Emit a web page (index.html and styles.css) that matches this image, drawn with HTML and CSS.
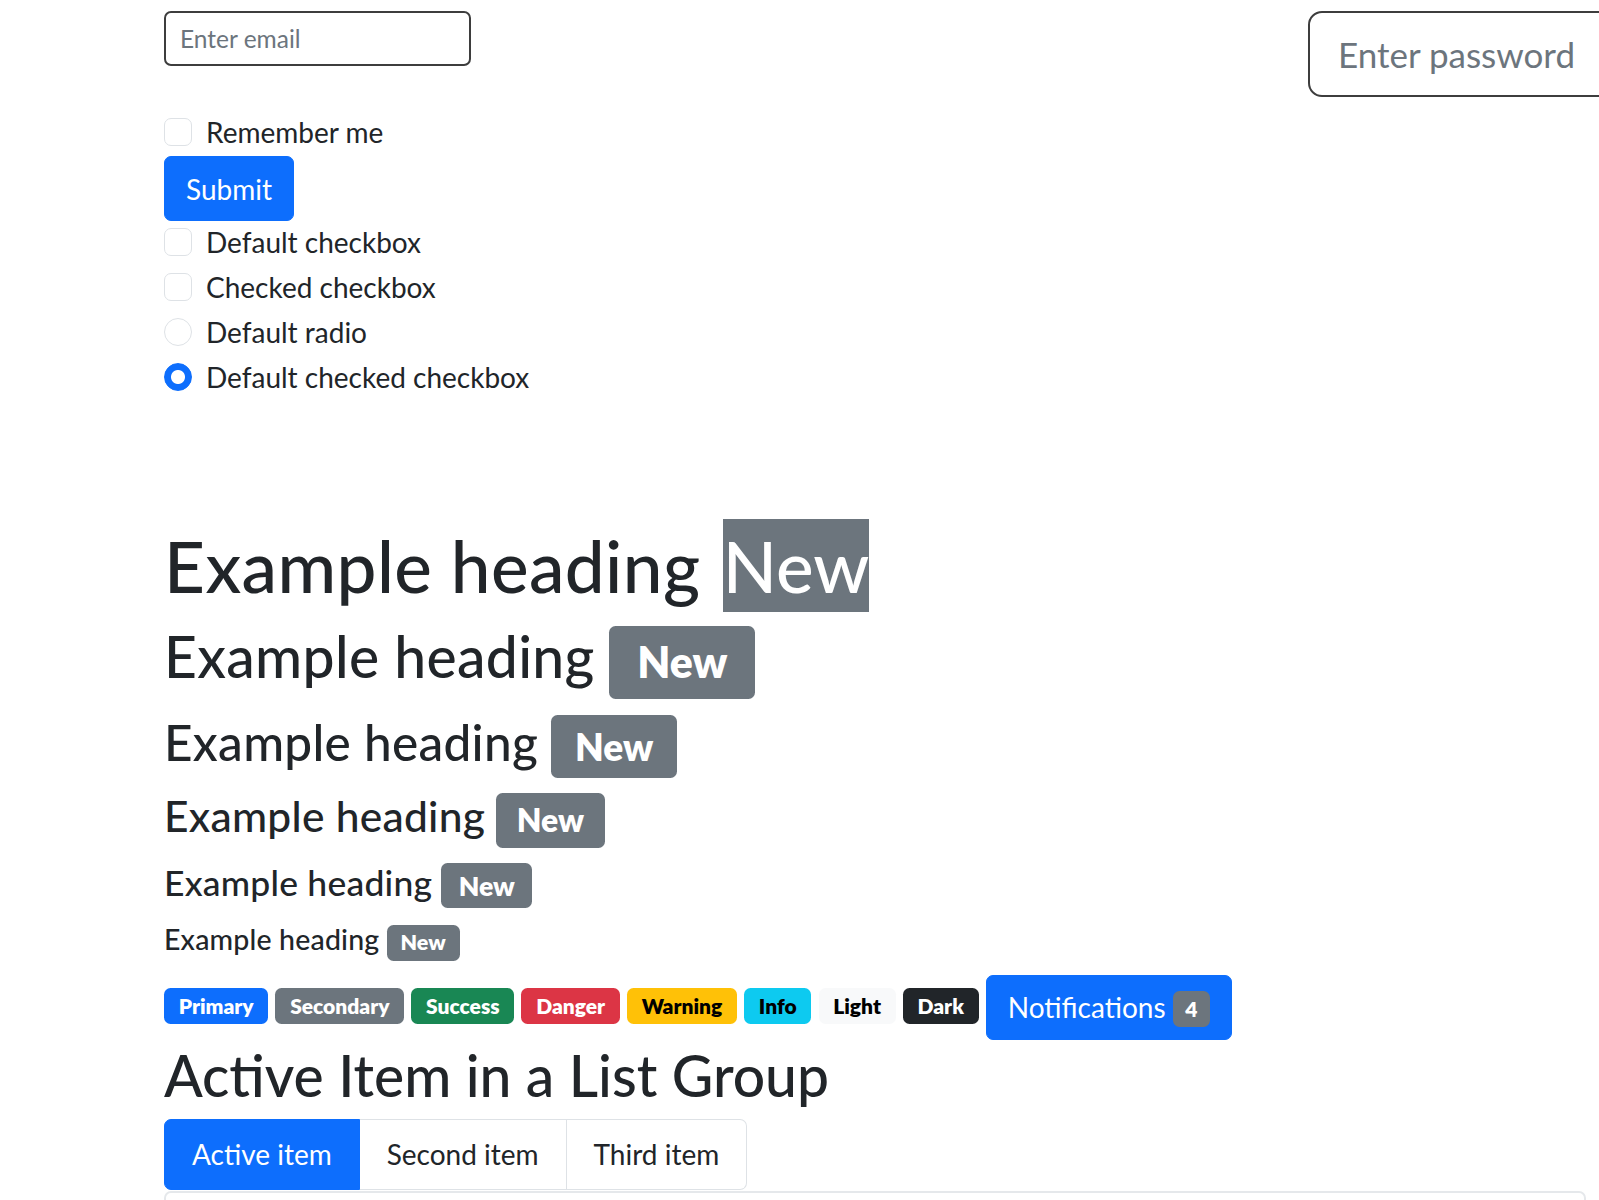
FILE: index.html
```html
<!DOCTYPE html>
<html lang="en">
<head>
<meta charset="utf-8">
<title>Forms, headings, badges and list group</title>
<link rel="stylesheet" href="styles.css">
</head>
<body>
<main class="page">
  <form class="login">
    <div class="login-row">
      <div class="col-email">
        <input class="field field-sm" type="email" placeholder="Enter email">
      </div>
      <div class="col-password">
        <input class="field field-lg" type="password" placeholder="Enter password">
      </div>
    </div>
    <label class="check"><input class="check-input" type="checkbox">Remember me</label>
    <button class="btn btn-primary" type="button">Submit</button>
  </form>

  <div class="checks">
    <label class="check"><input class="check-input" type="checkbox">Default checkbox</label>
    <label class="check"><input class="check-input" type="checkbox">Checked checkbox</label>
    <label class="check"><input class="check-input radio" type="radio" name="r">Default radio</label>
    <label class="check"><input class="check-input radio is-on" type="radio" name="r2">Default checked checkbox</label>
  </div>

  <section class="headings">
    <h1 class="h h1">Example heading <span class="mark">New</span></h1>
    <h2 class="h h2">Example heading <span class="badge bg-secondary">New</span></h2>
    <h3 class="h h3">Example heading <span class="badge bg-secondary">New</span></h3>
    <h4 class="h h4">Example heading <span class="badge bg-secondary">New</span></h4>
    <h5 class="h h5">Example heading <span class="badge bg-secondary">New</span></h5>
    <h6 class="h h6">Example heading <span class="badge bg-secondary">New</span></h6>
  </section>

  <div class="badges">
    <span class="badge bg-primary">Primary</span>
    <span class="badge bg-secondary">Secondary</span>
    <span class="badge bg-success">Success</span>
    <span class="badge bg-danger">Danger</span>
    <span class="badge bg-warning">Warning</span>
    <span class="badge bg-info">Info</span>
    <span class="badge bg-light">Light</span>
    <span class="badge bg-dark">Dark</span>
    <button class="btn btn-primary" type="button">Notifications <span class="badge bg-secondary">4</span></button>
  </div>

  <h2 class="h h2 list-title">Active Item in a List Group</h2>
  <ul class="list-group">
    <li class="list-item active">Active item</li>
    <li class="list-item">Second item</li>
    <li class="list-item">Third item</li>
  </ul>
  <div class="panel"></div>
</main>
</body>
</html>
```
FILE: styles.css
```css
html {
  overflow: hidden;
}
body {
  margin: 0;
  font-family: "Lato", "Liberation Sans", sans-serif;
  font-size: 28px;
  line-height: 1.5;
  color: #212529;
  background: #fff;
}
.page {
  padding: 11px 13px 0 164px;
}

/* form */
.login-row {
  display: grid;
  grid-template-columns: 1144px 420px;
  align-items: start;
  margin-bottom: 14px;
}
.field {
  display: block;
  width: 100%;
  box-sizing: border-box;
  font-family: inherit;
  color: #212529;
  background: #fff;
  border: 2px solid #3d3d3d;
  outline: none;
}
.field::placeholder {
  color: #6c757d;
  opacity: 1;
}
.field-sm {
  width: 307px;
  height: 55px;
  padding: 7px 14px;
  font-size: 24.5px;
  border-radius: 7px;
}
.field-lg {
  height: 86px;
  padding: 14px 28px;
  font-size: 35px;
  border-radius: 14px;
}

.check {
  display: block;
  min-height: 42px;
  padding-left: 42px;
  margin-bottom: 3px;
}
.check-input {
  appearance: none;
  -webkit-appearance: none;
  float: left;
  box-sizing: border-box;
  width: 28px;
  height: 28px;
  margin: 7px 0 0 -42px;
  border: 1.5px solid #dee2e6;
  border-radius: 7px;
  background: #fff;
}
.check-input.radio {
  border-radius: 50%;
}
.check-input.is-on {
  border-color: #0d6efd;
  background: radial-gradient(circle, #fff 0 6.5px, #0d6efd 7.5px);
}

.btn {
  display: inline-block;
  font-family: inherit;
  font-size: 28px;
  line-height: 42px;
  padding: 10.5px 21px;
  border: 1px solid transparent;
  border-radius: 7px;
  vertical-align: middle;
  cursor: pointer;
}
.btn-primary {
  color: #fff;
  background: #0d6efd;
  border-color: #0d6efd;
}
.login .btn {
  display: block;
}

/* headings */
.headings {
  margin-top: 125px;
}
.h {
  margin: 0 0 14px;
  font-weight: 500;
  line-height: 1.2;
  letter-spacing: 0.006em;
}
.h1 { font-size: 71px; }
.h2 { font-size: 57px; }
.h3 { font-size: 49.5px; margin-bottom: 11.5px; }
.h4 { font-size: 42.5px; }
.h5 { font-size: 35.5px; }
.h6 { font-size: 28.5px; margin-bottom: 13.5px; }

.mark {
  background: #6c757d;
  color: #fff;
  padding: 4px 0;
  margin-left: 4px;
  letter-spacing: 0;
}

.badge {
  display: inline-block;
  font-size: 0.75em;
  font-weight: 800;
  line-height: 1;
  letter-spacing: 0;
  padding: 0.35em 0.65em;
  border-radius: 6.5px;
  color: #fff;
  text-align: center;
  white-space: nowrap;
  vertical-align: baseline;
}
.bg-primary { background: #0d6efd; }
.bg-secondary { background: #6c757d; }
.bg-success { background: #198754; }
.bg-danger { background: #dc3545; }
.bg-warning { background: #ffc107; color: #000; }
.bg-info { background: #0dcaf0; color: #000; }
.bg-light { background: #f8f9fa; color: #000; }
.bg-dark { background: #212529; }

.badges {
  line-height: 42px;
}
.badges > .badge {
  padding: 0.35em 0.7em;
}
.btn .badge {
  position: relative;
  top: -1px;
  padding: 0.35em 0.6em;
}

.list-title {
  margin-top: 1px;
  margin-bottom: 10px;
  letter-spacing: 0;
}
.list-group {
  display: flex;
  margin: 0;
  padding: 0;
  list-style: none;
}
.list-item {
  padding: 14px 27px;
  line-height: 41px;
  border: 1px solid #dee2e6;
  background: #fff;
  color: #212529;
}
.list-item + .list-item {
  border-left-width: 0;
}
.list-item:first-child {
  border-radius: 7px 0 0 7px;
}
.list-item:last-child {
  border-radius: 0 7px 7px 0;
}
.list-item.active {
  background: #0d6efd;
  border-color: #0d6efd;
  color: #fff;
}
.panel {
  height: 120px;
  margin-top: 1px;
  border: 2px solid #e5e8eb;
  border-radius: 7px;
}
```
